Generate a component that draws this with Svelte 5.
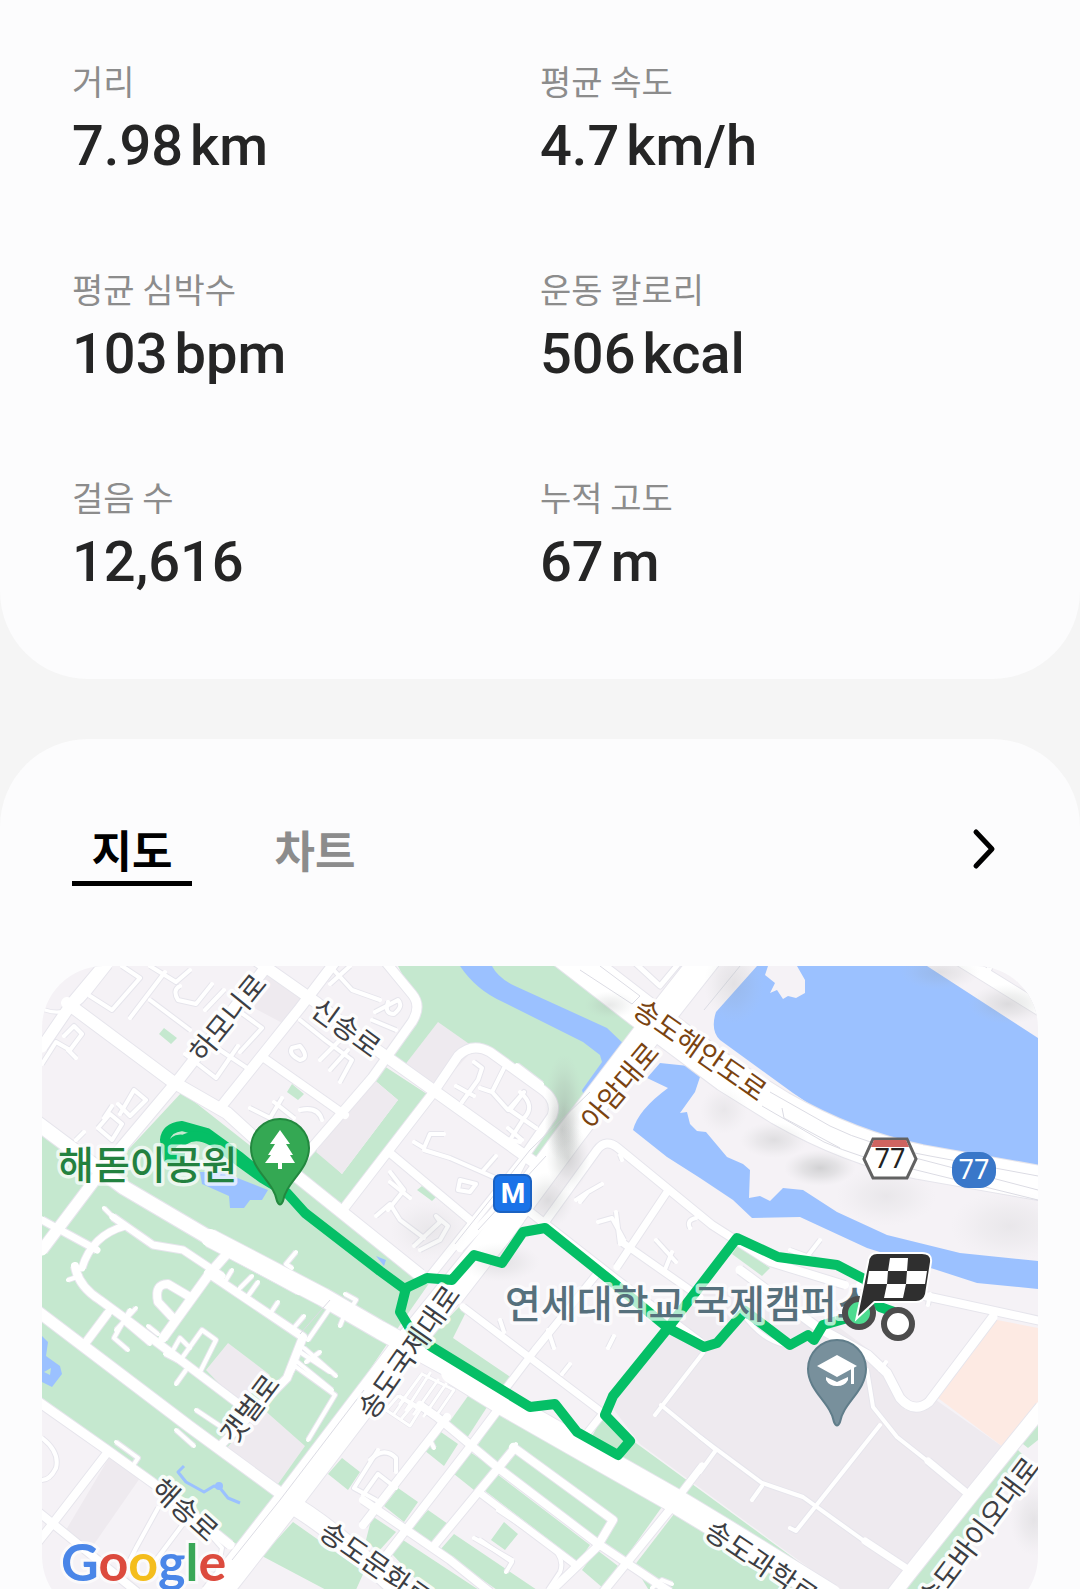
<script>
  const stats = [
    { label: '거리', value: '7.98', unit: 'km' },
    { label: '평균 속도', value: '4.7', unit: 'km/h' },
    { label: '평균 심박수', value: '103', unit: 'bpm' },
    { label: '운동 칼로리', value: '506', unit: 'kcal' },
    { label: '걸음 수', value: '12,616', unit: '' },
    { label: '누적 고도', value: '67', unit: 'm' },
  ];

  const tabs = ['지도', '차트'];
  let activeTab = $state('지도');

  // Land use under the roads
  const areas = [
    // parks
    ['park', 'M182 1092 L300 1185 L430 1282 L400 1325 L278 1505 L245 1550 L153 1486 L42 1400 V1130 L95 1166 L128 1150Z'],
    ['park', 'M398 966 H565 L640 1018 L622 1050 L585 1108 L538 1166 L522 1156 L556 1112 L548 1090 L478 1046 L405 1066 L388 1056 L420 1010Z'],
    ['park', 'M384 1066 L430 1096 L344 1205 L290 1166 L312 1146 L342 1174 L398 1100 L372 1078Z'],
    ['park', 'M460 1306 L466 1312 L453 1338 L512 1378 L505 1392 L425 1342Z'],
    ['park', 'M500 1410 L664 1504 L624 1560 L476 1448Z'],
    ['park', 'M497 1474 L590 1545 L578 1562 L484 1490Z'],
    ['park', 'M468 1396 Q485 1394 489 1404 L467 1438 L448 1424Z'],
    ['park', 'M438 1430 L458 1444 L444 1466 L424 1450Z M470 1452 L494 1468 L474 1490 L454 1474Z'],
    ['park', 'M398 1488 L418 1502 L404 1522 L384 1506Z M428 1510 L448 1524 L433 1545 L412 1528Z'],
    ['park', 'M372 1516 L396 1532 L378 1552 L366 1540Z M504 1522 L518 1534 L505 1550 L491 1540Z'],
    ['park', 'M454 1534 L540 1592 H500 L440 1550Z M403 1540 L482 1592 H428 L392 1554Z'],
    ['park', 'M597 1550 L618 1566 L603 1588 L582 1570Z'],
    ['park', 'M674 1514 L700 1528 L800 1592 H650 L634 1566Z'],
    ['park', 'M602 1418 L640 1446 L840 1592 H800 L672 1504 L590 1440Z'],
    ['park', 'M1016 1448 L1024 1456 L925 1592 H898Z M1038 1415 V1440 L1028 1448 L1018 1440Z'],
    ['park', 'M293 1522 L364 1572 L355 1592 H330 L262 1556Z M342 1458 L360 1472 L348 1490 L328 1474Z'],
    ['park', 'M164 1028 L177 1038 L171 1044 L159 1034Z M292 1084 L304 1094 L298 1100 L287 1092Z M422 1186 L437 1196 L432 1201 L417 1190Z'],
    ['park', 'M738 1245 L770 1268 L762 1276 L732 1254Z'],
    // campus and blocks
    ['block', 'M668 1330 L712 1285 L770 1310 L836 1325 L872 1352 L905 1410 L936 1400 L1003 1447 L905 1575 L895 1592 H842 L640 1444 L608 1402Z'],
    ['block', 'M438 1022 L475 1048 L436 1090 L404 1066Z M372 1078 L398 1100 L342 1174 L316 1152Z'],
    ['block', 'M264 970 L304 1000 L288 1026 L254 1008Z M228 1343 L270 1375 L240 1405 L206 1370Z'],
    ['block', 'M262 1408 L305 1446 L278 1484 L225 1450Z M110 1456 L140 1478 L90 1550 L66 1530Z'],
    ['peach', 'M997 1320 L1038 1328 V1402 L1003 1447 L938 1398Z'],
    // water
    ['water', 'M460 966 H492 Q498 978 515 986 L583 1017 L607 1028 L628 1048 L614 1058 L588 1093 Q583 1096 582 1090 L602 1062 L600 1055 L583 1042 L503 1002 Q476 990 460 966Z'],
    ['water', 'M757 966 H927 L1038 1038 V1171 L983 1158 L877 1137 L833 1120 L793 1093 L720 1040 Q710 1030 716 1012Z'],
    ['water', 'M660 1063 L698 1067 L700 1077 L695 1092 L680 1113 L687 1112 L690 1124 L697 1131 L706 1132 L727 1157 L743 1164 L750 1170 L749 1198 L760 1196 L770 1201 L783 1188 L803 1190 L837 1212 L887 1235 L960 1253 L1038 1261 V1289 L977 1283 L937 1270 L867 1248 L800 1217 L752 1218 L733 1200 L700 1178 L667 1157 L633 1130 Q638 1110 668 1088 L647 1078Z'],
    ['water', 'M200 1172 L222 1172 L268 1190 L262 1200 L250 1200 L244 1208 L230 1208 L229 1196 L202 1184Z'],
    ['water', 'M42 1336 L48 1342 L46 1356 L60 1366 L62 1374 L52 1387 L42 1382Z M376 1256 L386 1260 L384 1266Z'],
    ['land', 'M768 966 H797 L805 980 L805 993 L796 998 L788 996 L783 999 L777 990 L770 993 L775 983 L765 975Z'],
    ['park', 'M44 1372 L51 1368 L50 1375Z'],
  ];

  // [width, path] drawn first as a grey casing, then in white
  const roads = [
    [8, 'M460 1248 L500 1205 L523 1160 M458 1300 L520 1220 M427 1280 L525 1157'],
    [3, 'M45 1010 Q80 1022 104 966'],
    [11, 'M42 1047 L72 1003 L108 960'],
    [12, 'M67 1003 L173 1082 L227 1113 L293 1173 L420 1275'],
    [11, 'M42 1250 L100 1173 L180 1078 L270 962'],
    [10, 'M220 1108 L300 1008 L335 962'],
    [11, 'M250 956 L317 1003 L370 1045 L433 1090 L535 1163'],
    [8, 'M264 1058 L345 1115'],
    [9, 'M290 1173 L372 1078 L412 1022 Q422 1006 412 994 L384 960'],
    [9, 'M345 1207 L433 1093 L458 1056 Q472 1042 490 1052 L540 1088 Q558 1100 552 1116 L525 1155'],
    [8, 'M390 1153 L470 1220'],
    [14, 'M36 1122 L123 1187 L230 1250 L300 1288'],
    [18, 'M210 1238 L323 1297 L380 1330 L453 1370'],
    [24, 'M453 1372 L503 1403 L603 1460 L677 1502 L720 1528 L830 1596'],
    [11, 'M36 1310 L190 1427 L284 1496'],
    [8, 'M75 1266 Q78 1286 100 1300 L130 1322 L240 1405'],
    [8, 'M84 1345 L108 1313'],
    [9, 'M163 1338 L210 1273 L232 1248'],
    [8, 'M208 1273 L303 1337 L287 1378 L220 1446'],
    [9, 'M36 1400 L107 1450 L153 1483 L230 1545'],
    [8, 'M107 1453 L50 1527 L38 1542 M36 1510 L137 1592'],
    [7, 'M113 1217 L153 1245 L183 1250 L222 1276 M125 1226 Q92 1235 82 1268 M42 1220 L97 1250'],
    [8, 'M172 1317 L158 1302 Q154 1284 168 1284 L190 1297'],
    [18, 'M284 1500 Q330 1525 400 1592'],
    [8, 'M545 1222 L597 1150 Q606 1138 618 1148 L712 1225 L770 1262 L845 1285'],
    [8, 'M530 1212 L617 1280 L700 1342'],
    [7, 'M463 1307 L603 1413 M500 1396 L535 1350 L600 1270 M617 1267 L667 1192 M623 1243 L700 1297 M588 1432 L604 1412'],
    [9, 'M740 1270 L817 1327 L868 1355 L887 1373 L900 1398 Q914 1414 929 1402 L993 1317'],
    [8, 'M860 1285 L930 1297 L1045 1322'],
    [14, 'M1042 1408 L970 1497 L905 1579 L892 1596'],
    [4, 'M740 1310 Q760 1340 785 1345 M700 1437 L762 1483 L803 1497 L867 1543'],
    [7, 'M865 1541 L912 1572 M928 1461 L968 1494'],
    [4, 'M867 1370 L873 1407 L897 1437 L930 1463 M880 1425 L796 1531 L790 1528 M703 1353 L655 1415 M661 1405 L716 1450 L700 1472 M762 1486 L752 1500'],
    [8, 'M447 1417 L363 1525 M500 1407 L470 1447 L385 1557 M513 1450 L433 1547 M672 1507 L603 1592 M513 1447 L613 1520 L597 1547 L550 1592'],
    [8, 'M420 1405 L437 1417 L497 1467 L597 1543 L670 1592 M363 1500 L450 1560 L490 1592'],
    [7, 'M480 1493 L577 1566 M676 1500 L702 1466'],
    [34, 'M560 948 L640 1010 L727 1075 L780 1108 Q850 1148 920 1162 L1045 1184'],
    [28, 'M724 936 L650 1030 L570 1135 L500 1230 L403 1350 L285 1505 L214 1596'],
    [13, 'M945 950 L1045 1012'],
    [5, 'M984 978 L994 960 M634 962 L660 986 L690 950'],
  ];

  // Alleys and driveways
  const alleys = [
    'M88 994 L110 966 M90 996 L112 1010 L140 978 L122 966 M150 966 L176 982 L190 970 M130 1018 L165 972 M150 1000 L190 1030',
    'M180 986 Q172 990 178 1000 L196 1004 L212 984 M205 1010 L224 990 M240 1052 L262 1028 L232 1006 M185 1054 L216 1078 L238 1046',
    'M64 1036 L74 1026 L82 1034 L70 1050 L56 1042 L42 1064 M68 1050 L76 1058',
    'M98 1128 L110 1114 L122 1124 L112 1140 L98 1128 M104 1118 L112 1106 M120 1114 L134 1090 L146 1100 L130 1116 L118 1104 M42 1130 L50 1138 M76 1140 L84 1132',
    'M205 1040 L250 1070 L226 1096 M274 1102 L294 1118 M250 1108 L270 1118 L282 1098 M300 1110 Q318 1106 322 1120',
    'M300 1020 L325 1040 L352 1060 L340 1082 M320 1060 L340 1040 M330 1070 L348 1050 M292 1048 Q288 1054 300 1060 Q310 1058 300 1046Z',
    'M330 966 L352 990 L380 1000 M350 966 L330 984 M375 1012 L398 1000 Q404 1006 394 1014 Q384 1014 388 1002 M372 1020 L396 1030',
    'M474 1062 L482 1068 L478 1080 L462 1102 M456 1086 L474 1096 M504 1068 L492 1092 L480 1088 M492 1092 L508 1110 L524 1092 L510 1110 L536 1128',
    'M520 1092 Q536 1106 524 1118 L510 1140 L520 1142 M508 1128 L522 1140 M517 1065 L542 1084',
    'M414 1142 L424 1148 L430 1134 L444 1134 M424 1150 L450 1158 L482 1172 L496 1156 M482 1172 L500 1180 M460 1180 L476 1184 L470 1192 L458 1190Z',
    'M390 1172 L404 1190 L388 1210 M376 1216 L390 1204 L400 1220 L424 1238 M414 1246 L440 1222 L436 1216 L448 1226 L440 1240 L420 1250',
    'M390 1182 L410 1198 M576 1200 L588 1192 L602 1184 M588 1192 L580 1202 M598 1222 L612 1218 L624 1240 M620 1244 L616 1212',
    'M690 1228 Q686 1220 696 1218 M672 1252 L664 1272 M656 1240 L676 1262 M620 1155 L622 1160',
    'M608 1348 L614 1336 M562 1374 L570 1364 M500 1320 L504 1332 M548 1330 L554 1348',
    'M370 1460 Q384 1446 396 1458 L396 1472 M363 1495 L378 1474 L396 1488 M430 1440 L434 1448',
    'M116 1330 L136 1308 M130 1310 L114 1338 L128 1350 M124 1322 L150 1344 M148 1326 L158 1334',
    'M165 1354 L200 1372 L216 1340 L202 1330 L182 1358 M172 1352 L180 1338 L190 1348 M186 1370 L176 1384',
    'M196 1410 L220 1426 M176 1430 L194 1446 M116 1442 L138 1458 L134 1464',
    'M42 1438 Q60 1452 56 1468 Q50 1480 42 1480 M136 1548 L158 1508 M136 1548 L130 1560 M156 1560 L186 1520 M206 1530 L222 1548 L218 1570',
    'M226 1280 L232 1270 M240 1288 L252 1276 M248 1296 L258 1282 M270 1314 L278 1302 M292 1330 L304 1316 M308 1340 L330 1308 L352 1320 M345 1294 L356 1300 L350 1310 M340 1326 L344 1316',
    'M300 1352 L330 1372 M295 1360 L332 1390 M304 1348 L336 1376 M288 1378 L295 1366 L335 1395 L308 1440 M306 1362 L320 1352',
    'M104 1208 L114 1218 M296 1252 L286 1264 L292 1268 M68 1280 L80 1276',
    'M378 1450 L354 1488 L376 1500 M480 1540 L512 1562 L506 1572 M498 1510 L546 1542 Q566 1556 560 1572 L548 1590 M508 1455 L516 1444',
    'M512 1560 L474 1538 M652 1588 L662 1580 L672 1584 M928 1305 L930 1294 M880 1370 L886 1362',
    'M820 1240 L806 1258 M790 1250 L850 1272',
  ];

  // Parking rows, too narrow for the alley width
  const parking = [
    'M422 1374 L454 1390 L436 1416 M430 1373 L406 1410 M422 1374 L400 1404 M438 1380 L414 1414 M446 1384 L424 1416 M400 1396 L438 1418',
    'M386 1410 L398 1396 L420 1410 L410 1426 L386 1410 M394 1414 L404 1400 M402 1418 L412 1406',
  ];

  const laneLines = [
    'M600 966 L640 996 L632 1004 L580 970',
    'M770 1092 L830 1126 Q870 1146 930 1156 L1038 1176',
    'M762 1106 L824 1142 Q860 1158 900 1166 L1038 1200',
    'M782 1108 L784 1118 L840 1148 M900 1154 L1038 1190',
    'M364 1390 L280 1500 L232 1560 M740 966 L704 1010',
    'M455 1244 L530 1150 L590 1092 M478 1230 L546 1156',
    'M300 1334 L330 1300',
  ];

  // Soft hill shading: cx, cy, rx, ry, opacity
  const shades = [
    [564, 1110, 20, 56, 0.35],
    [562, 1130, 18, 30, 0.35],
    [568, 1158, 22, 34, 0.35],
    [548, 1200, 26, 28, 0.25],
    [820, 1168, 36, 18, 0.35],
    [774, 1140, 34, 18, 0.22],
    [886, 1196, 50, 30, 0.12],
    [1010, 1226, 60, 36, 0.12],
    [1008, 1004, 40, 20, 0.25],
    [734, 984, 30, 40, 0.18],
    [724, 1110, 24, 24, 0.12],
    [610, 1005, 26, 14, 0.2],
    [940, 972, 40, 18, 0.2],
    [430, 1230, 40, 30, 0.12],
    [500, 1262, 40, 20, 0.18],
    [1034, 1520, 24, 36, 0.16],
  ];

  const route = [
    'M185 1158 H168 L165 1140 Q166 1128 182 1126 L207 1133 L240 1157 L270 1182 L287 1193 L305 1213 L380 1271 L406 1290',
    'M170 1148 Q174 1138 184 1140 Q196 1132 212 1141 L240 1162 L262 1178 L282 1190',
    'M406 1288 L427 1278 L452 1280 L474 1255 L502 1263 L523 1232 L545 1228 L610 1280 L668 1328 L704 1347 L717 1343 L745 1311 L790 1345 L808 1335 L814 1340 L823 1325 L858 1315',
    'M406 1288 L400 1312 L412 1332 L432 1347 L530 1407 L555 1404 L577 1432 L618 1455 L630 1441 L605 1415 L613 1396 L668 1328 L737 1238 L778 1257 L837 1265 L866 1280 L880 1307 L894 1312',
  ];

  // Street names along their roads
  const streets = [
    { name: '하모니로', x: 228, y: 1018, angle: -51, anchor: 'middle' },
    { name: '신송로', x: 346, y: 1028, angle: 36, anchor: 'middle' },
    { name: '송도해안도로', x: 700, y: 1050, angle: 35, anchor: 'middle', main: true },
    { name: '아암대로', x: 620, y: 1086, angle: -50, anchor: 'middle', main: true },
    { name: '송도국제대로', x: 409, y: 1352, angle: -55, anchor: 'middle' },
    { name: '갯벌로', x: 250, y: 1409, angle: -53, anchor: 'middle' },
    { name: '해송로', x: 185, y: 1510, angle: 42, anchor: 'middle' },
    { name: '송도문화로', x: 323, y: 1528, angle: 35, anchor: 'start' },
    { name: '송도과학로', x: 708, y: 1527, angle: 34, anchor: 'start' },
    { name: '송도바이오대로', x: 1033, y: 1461, angle: -53, anchor: 'end' },
  ];

  const google = [
    ['G', '#4a86e8'],
    ['o', '#dc4b3e'],
    ['o', '#f4bd1c'],
    ['g', '#4a86e8'],
    ['l', '#3aa757'],
    ['e', '#dc4b3e'],
  ];
</script>

<main>
  <section class="card summary">
    <dl>
      {#each stats as stat}
        <div class="stat">
          <dt>{stat.label}</dt>
          <dd>
            <span>{stat.value}</span>
            {#if stat.unit}<span>{stat.unit}</span>{/if}
          </dd>
        </div>
      {/each}
    </dl>
  </section>

  <section class="card track">
    <header>
      <div class="tabs" role="tablist">
        {#each tabs as tab}
          <button
            class="tab"
            class:active={activeTab === tab}
            role="tab"
            aria-selected={activeTab === tab}
            onclick={() => (activeTab = tab)}
          >{tab}</button>
        {/each}
      </div>
      <button class="more" aria-label="자세히">
        <svg width="24" height="42" viewBox="0 0 24 42">
          <path d="M4 4 L20 21 L4 38" />
        </svg>
      </button>
    </header>

    <svg class="map" viewBox="42 966 996 623" role="img" aria-label="지도">
      <defs>
        <clipPath id="frame"><rect x="42" y="966" width="996" height="652" rx="62" /></clipPath>
        <radialGradient id="shade">
          <stop offset="0" stop-color="#8f9492" stop-opacity="1" />
          <stop offset="0.5" stop-color="#a0a5a3" stop-opacity="0.6" />
          <stop offset="1" stop-color="#c0c4c4" stop-opacity="0" />
        </radialGradient>
      </defs>

      <g clip-path="url(#frame)">
        <rect class="land" x="42" y="966" width="996" height="652" />
        {#each areas as [kind, d]}
          <path class={kind} {d} />
        {/each}

        {#each alleys as d}
          <path class="casing" {d} stroke-width="6" />
        {/each}
        {#each parking as d}
          <path class="casing" {d} stroke-width="4" />
        {/each}
        {#each roads as [width, d]}
          <path class="casing" {d} stroke-width={width + 2} />
        {/each}
        {#each alleys as d}
          <path class="road" {d} stroke-width="4" />
        {/each}
        {#each parking as d}
          <path class="road" {d} stroke-width="3" />
        {/each}
        {#each roads as [width, d]}
          <path class="road" {d} stroke-width={width} />
        {/each}
        {#each laneLines as d}
          <path class="lane" {d} />
        {/each}
        <path class="stream" d="M184 1466 L178 1472 L186 1482 L204 1492 L214 1486 L220 1488 L228 1498 L240 1503" />
        <circle class="water" cx="219" cy="1486" r="4" />

        {#each shades as [cx, cy, rx, ry, opacity]}
          <ellipse {cx} {cy} {rx} {ry} {opacity} fill="url(#shade)" />
        {/each}

        {#each route as d}
          <path class="route" {d} />
        {/each}

        {#each streets as street}
          <text
            class="street"
            class:main={street.main}
            text-anchor={street.anchor}
            transform="translate({street.x} {street.y}) rotate({street.angle})"
            y="10"
          >{street.name}</text>
        {/each}

        <text class="place green" x="58" y="1179">해돋이공원</text>
        <text class="place slate" x="505" y="1318">연세대학교 국제캠퍼스</text>

        <!-- park pin -->
        <path class="pin-park" d="M280 1119 A29 29 0 0 1 309 1148 C309 1170 286 1182 283 1201 Q280 1208 277 1201 C274 1182 251 1170 251 1148 A29 29 0 0 1 280 1119Z" />
        <path class="glyph" d="M280 1130 L290 1144 H286 L293 1155 H290 L295 1163 H282 V1169 H278 V1163 H265 L271 1155 H268 L275 1144 H270Z" />

        <!-- campus pin -->
        <path class="pin-campus" d="M837 1340 A29 29 0 0 1 866 1369 C866 1391 843 1403 840 1422 Q837 1429 834 1422 C831 1403 808 1391 808 1369 A29 29 0 0 1 837 1340Z" />
        <path class="glyph" d="M817 1366 L837 1355 L857 1366 L837 1377Z M851 1368 L854 1366 V1384 H851Z M826 1377 L837 1382 L848 1377 V1380 Q845 1386 837 1386 Q829 1386 826 1380Z" />

        <!-- subway -->
        <rect class="subway" x="494" y="1175" width="37" height="37" rx="6" />
        <text class="subway-text" x="513" y="1203">M</text>

        <!-- route shields -->
        <path class="hex" d="M873 1139 H907 L916 1159 L907 1178 H873 L864 1159Z" />
        <path class="hex-top" d="M874 1140 H906 L909 1147 H871Z" />
        <text class="shield" x="890" y="1168">77</text>
        <rect class="blue-shield" x="952" y="1152" width="44" height="36" rx="16" />
        <text class="shield light" x="974" y="1179">77</text>

        <!-- start and finish -->
        <circle class="finish" cx="859" cy="1313" r="14" />
        <circle class="start" cx="898" cy="1324" r="14" />
        <path class="flag-edge" d="M877 1254 H922 Q931 1254 930 1262 L925 1294 Q923 1301 916 1301 H874 L858 1316 L869 1262 Q870 1254 877 1254Z" />
        <path class="flag" d="M877 1254 H922 Q931 1254 930 1262 L925 1294 Q923 1301 916 1301 H874 L858 1316 L869 1262 Q870 1254 877 1254Z" />
        <path class="glyph" d="M890 1258 H908 L907 1271 H888Z M869 1271 H888 L887 1284 H867Z M907 1271 H927 L925 1284 H906Z M887 1284 H906 L903 1298 H884Z" />

        <text class="google" x="61" y="1581">{#each google as [letter, color]}<tspan fill={color}>{letter}</tspan>{/each}</text>
      </g>
    </svg>
  </section>
</main>

<style>
  :global(body) {
    margin: 0;
    background: #f5f5f5;
    font-family: 'Noto Sans CJK KR', sans-serif;
  }

  main {
    display: flex;
    flex-direction: column;
    gap: 60px;
  }

  .card {
    background: #fcfcfd;
  }

  .summary {
    padding: 56px 72px 77px;
    border-radius: 0 0 88px 88px;
  }

  dl {
    display: grid;
    grid-template-columns: 1fr 1fr;
    row-gap: 78px;
    margin: 0;
  }

  dt {
    color: #8c8c8c;
    font-size: 34px;
    line-height: 50px;
  }

  dd {
    display: flex;
    gap: 7px;
    margin: 0;
    color: #252525;
    font-family: Roboto, 'Noto Sans CJK KR', sans-serif;
    font-size: 56px;
    font-weight: 500;
    line-height: 80px;
  }

  .track {
    padding-top: 72px;
    border-radius: 88px 88px 0 0;
  }

  header {
    display: flex;
    align-items: center;
    justify-content: space-between;
    margin: 0 84px 80px 72px;
  }

  .tabs {
    display: flex;
    gap: 63px;
  }

  button {
    padding: 0;
    border: 0;
    background: none;
    font-family: inherit;
    cursor: pointer;
  }

  .tab {
    width: 120px;
    padding-top: 6px;
    border-bottom: 5px solid transparent;
    color: #8c8c8c;
    font-size: 44px;
    font-weight: 700;
    line-height: 64px;
  }

  .tab.active {
    border-color: #000;
    color: #000;
  }

  .more svg {
    display: block;
    fill: none;
    stroke: #000;
    stroke-width: 5;
    stroke-linecap: round;
    stroke-linejoin: round;
  }

  .map {
    display: block;
    width: calc(100% - 84px);
    margin: 0 auto;
  }

  .land { fill: #f5f2f6; }
  .park { fill: #c5e8cf; }
  .block { fill: #eeeaef; }
  .peach { fill: #fdeae3; }
  .water { fill: #9bc1ff; }

  .casing, .road, .lane, .stream, .route {
    fill: none;
    stroke-linejoin: round;
  }

  .casing { stroke: #e6e5ec; }
  .road { stroke: #fff; stroke-linecap: round; }
  .lane { stroke: #dcdce4; stroke-width: 1; }
  .stream { stroke: #9bc1ff; stroke-width: 3; }
  .route { stroke: #05bf66; stroke-width: 10; }

  .street, .place {
    paint-order: stroke;
    stroke: #fff;
    stroke-width: 7;
    stroke-linejoin: round;
  }

  .street {
    fill: #3c3e43;
    font-size: 28px;
    stroke-opacity: 0.9;
  }

  .street.main { fill: #7a4310; }

  .place {
    font-size: 39px;
    font-weight: 500;
    stroke-opacity: 0.7;
  }

  .green { fill: #23813f; }
  .slate { fill: #56707c; }

  .pin-park { fill: #34a853; stroke: #23883f; stroke-width: 2; }
  .pin-campus { fill: #78909c; stroke: #607d8a; stroke-width: 2; }
  .glyph { fill: #fff; }

  .subway { fill: #1a73e8; stroke: #1b62c2; stroke-width: 2; }

  .subway-text {
    fill: #fff;
    font-family: Roboto, sans-serif;
    font-size: 28px;
    font-weight: 700;
    text-anchor: middle;
  }

  .hex { fill: #fff; stroke: #626262; stroke-width: 3; }
  .hex-top { fill: #cf6460; }
  .blue-shield { fill: #3977c9; }

  .shield {
    fill: #222;
    font-family: 'Noto Sans', sans-serif;
    font-size: 27px;
    text-anchor: middle;
  }

  .shield.light { fill: #fff; }

  .finish { fill: #4ddb8f; stroke: #4c4c4c; stroke-width: 6; }
  .start { fill: #fff; stroke: #4c4c4c; stroke-width: 6; }
  .flag-edge { fill: none; stroke: #fff; stroke-width: 4; }
  .flag { fill: #2f2f2f; }

  .google {
    font-family: Lato, sans-serif;
    font-size: 52px;
    font-weight: 700;
    paint-order: stroke;
    stroke: #fff;
    stroke-opacity: 0.6;
    stroke-width: 6;
  }
</style>
